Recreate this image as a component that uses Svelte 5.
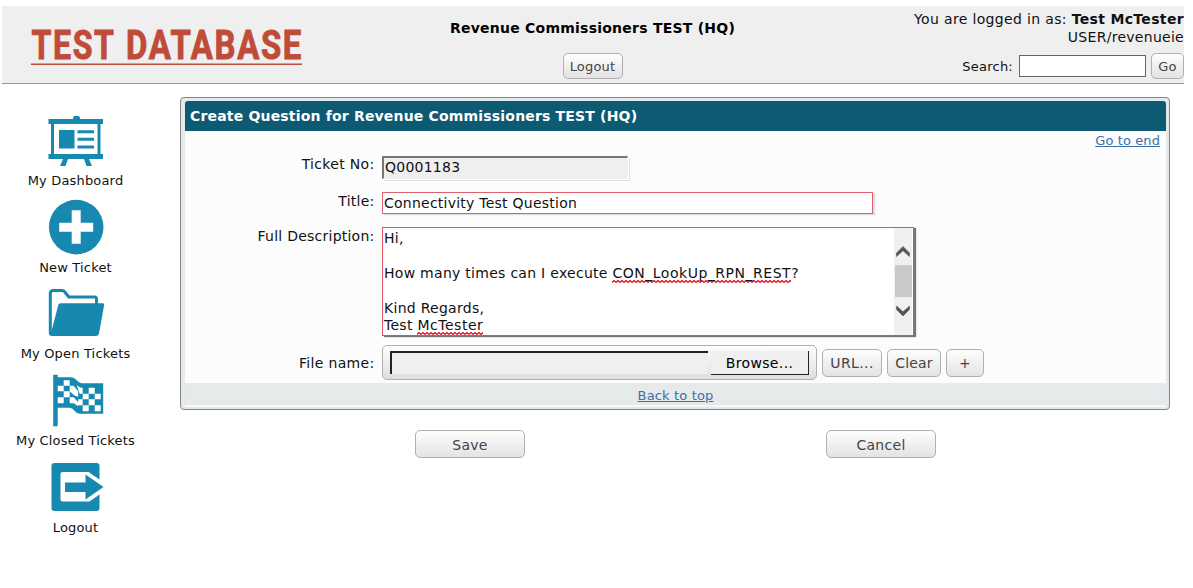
<script>
  const menu = [
    { icon: 'board', label: 'My Dashboard', view: '0.5 0 60 60' },
    { icon: 'plus', label: 'New Ticket', view: '0.3 0.7 60 60' },
    { icon: 'folder', label: 'My Open Tickets', view: '0.5 2 60 60' },
    { icon: 'flag', label: 'My Closed Tickets', view: '0.3 2.7 60 60' },
    { icon: 'exit', label: 'Logout', view: '0.5 2 60 60' }
  ];
</script>

<div class="page">
  <header>
    <div class="logo">
      <svg width="276" height="60" viewBox="0 -14 276 60">
        <text x="0.5" y="31" textLength="84" lengthAdjust="spacingAndGlyphs">TEST</text>
        <text x="95" y="31" textLength="177" lengthAdjust="spacingAndGlyphs">DATABASE</text>
        <rect x="0" y="35.500" width="271" height="1.5" fill="#bf4c38" />
      </svg>
    </div>
    <div class="org">
      <strong>Revenue Commissioners TEST (HQ)</strong>
      <button class="small">Logout</button>
    </div>
    <div class="user">
      <div class="who">You are logged in as: <strong>Test McTester</strong></div>
      <div class="role">USER/revenueie</div>
      <div class="search"><span>Search:</span><span class="searchbox"></span><button class="small go">Go</button></div>
    </div>
  </header>

  <div class="body">
    <nav>
      {#each menu as item}
        <div class="item">
          <svg width="60" height="60" viewBox={item.view} fill="#1789b0">
            {#if item.icon === 'board'}
              <path d="M27.500 7q0-2 2-2h3q2 0 2 2v1H57.500v5H55V43h2.500v5H43.500l3 7h-5.500l-2.500-7H22.500l-2.500 7h-5.500l3-7H3V43H5.500V13H3V8H27.500zM8.500 13V43H52V13zM13.500 19h15.500v18.500h-15.500zM32 19.200H48.500v3H32zM32 26.800H48.500v3H32zM32 34.500H48.500v3H32z" fill-rule="evenodd" />
            {:else if item.icon === 'plus'}
              <circle cx="30.500" cy="29.800" r="27.300" />
              <path d="M26 13h9v12.500h12.500v9H35v12h-9v-12H13.500v-9H26z" fill="#fff" />
            {:else if item.icon === 'folder'}
              <path d="M4.800 50V10.500q0-3 3-3h8.500q2 0 3 1.500l4 5H49q2 0 2 2v6" fill="none" stroke="#1789b0" stroke-width="3" stroke-linejoin="round" />
              <path d="M15 20.200H57.500q1.500 0 1.200 1.500L53.500 50.500q-.5 2.500-3 2.500H6.500q-3 0-3.200-3L6 48 12.800 22q.5-1.800 2.200-1.800z" />
            {:else if item.icon === 'flag'}
              <path d="M7.500 5.500h4.500v2.500h13.500q3 0 5 2.500t5 3.500H57.500V44.500H34q-3 0-5-2.800t-5-3.200H12V57H7.500z" />
              <path fill="#fff" d="M18 11h6v5.500h-6zM12 16.500h6v5.500h-6zM24 16.500h4l4.500 5.500v5.500l-3.500-1-5-4.500zM18 22h6v6h-6zM12 28h6v6h-6zM24 28h4l4.500 5v4l-4.500-3h-4zM31 16l4 2.500h2v6h-3zM43 18.500h6v6h-6zM37 24.500h6v5.500h-6zM49 24.500h6v5.500h-6zM32.500 30h4.500v6h-4.500zM43 30h6v6h-6zM37 36h6v6h-6zM49 36h6v6h-6z" />
            {:else}
              <path d="M9 6H51q3 0 3 3V51q0 3-3 3H9q-3 0-3-3V9q0-3 3-3z" />
              <path d="M17 15H43L60.500 27v6L44 44.500H17q-2 0-2-2V17q0-2 2-2z" fill="#fff" />
              <path d="M19.500 25.500H40v-8L58 30 40 42.500V35H19.500z" />
            {/if}
          </svg>
          <span>{item.label}</span>
        </div>
      {/each}
    </nav>

    <main>
      <section class="panel">
        <h1>Create Question for Revenue Commissioners TEST (HQ)</h1>
        <div class="form">
          <div class="toend"><a href="#end">Go to end</a></div>
          <div class="row ticket"><span class="label">Ticket No:</span><div class="readonly">Q0001183</div></div>
          <div class="row title"><span class="label">Title:</span><div class="field">Connectivity Test Question</div></div>
          <div class="row desc">
            <span class="label">Full Description:</span>
            <div class="area">
              <div class="lines">
                <p>Hi,</p>
                <p></p>
                <p>How many times can I execute <span class="spell">CON_LookUp_RPN_REST</span>?</p>
                <p></p>
                <p>Kind Regards,</p>
                <p>Test <span class="spell">McTester</span></p>
              </div>
              <div class="bar">
                <svg width="18" height="37" viewBox="0 0 18 37"><path d="M2.500 28.500V25L9 18.500l6.500 6.500v3.500L9 22.700z" fill="#555" stroke="#555" stroke-width=".6" /></svg>
                <div class="thumb"></div>
                <svg width="18" height="36" viewBox="0 0 18 36"><path d="M2.500 9v3.500L9 19l6.500-6.500V9L9 14.800z" fill="#555" stroke="#555" stroke-width=".6" /></svg>
              </div>
            </div>
          </div>
          <div class="row file">
            <span class="label">File name:</span>
            <div class="upload"><div class="path"></div><div class="browse">Browse...</div></div>
            <button class="b url">URL...</button>
            <button class="b clear">Clear</button>
            <button class="b add">+</button>
          </div>
        </div>
        <div class="foot"><a href="#top">Back to top</a></div>
      </section>
      <div class="actions"><button class="b">Save</button><button class="b">Cancel</button></div>
    </main>
  </div>
</div>

<style>
  :global(body) { background: #fff; overflow: hidden; }
  .page {
    box-sizing: border-box; width: 1193px; height: 588px; padding: 6px 9px 0 2px;
    font: 14px/18px Verdana, "DejaVu Sans", sans-serif; letter-spacing: .24px; color: #111; white-space: nowrap;
  }
  header {
    box-sizing: border-box; height: 78px; background: #efefef; border-bottom: 1px solid #999;
    display: grid; grid-template-columns: 395px 391px 1fr;
  }
  .logo { padding: 8px 0 0 29px; }
  .logo svg { display: block; }
  .logo text { font: 700 40px Roboto, sans-serif; letter-spacing: 2px; fill: #bf4c38; stroke: #bf4c38; stroke-width: .9px; }
  .org { display: flex; flex-direction: column; align-items: center; padding-top: 13px; color: #000; }
  .org button { width: 60px; margin-top: 16px; }
  button {
    box-sizing: border-box; padding: 1px 0 0; font: inherit; letter-spacing: .2px; color: #444; border: 1px solid #b0b0b0; border-radius: 5px;
    background: linear-gradient(#fefefe, #e3e3e3);
  }
  .small { height: 26px; font-size: 13px; }
  .user { text-align: right; padding-top: 4px; }
  .who { letter-spacing: .34px; }
  .role { letter-spacing: .28px; }
  .search { display: flex; justify-content: flex-end; align-items: center; height: 26px; margin-top: 7px; font-size: 13px; }
  .search span:first-child { padding-top: 1px; }
  .searchbox { box-sizing: border-box; width: 127px; height: 22px; border: 1px solid #666; background: #fff; margin: 0 5px 0 6px; }
  .go { width: 33px; }
  .body { display: flex; }
  nav { width: 147px; padding-top: 27px; margin-right: 31px; flex: none; }
  .item { height: 87px; display: flex; flex-direction: column; align-items: center; font-size: 13px; line-height: 18px; letter-spacing: .17px; }
  .item:nth-child(-n+2) span { padding-top: 1px; }
  .item svg { display: block; flex: none; }
  main { padding-top: 13px; width: 990px; flex: none; }
  .panel {
    box-sizing: border-box; height: 313px; border: 1px solid #858585; border-radius: 4px;
    background: #e4eaeb; padding: 3px 3px 3px 4px; overflow: hidden;
  }
  h1 {
    box-sizing: border-box; height: 30px; margin: 0; padding-left: 5px; background: #0e5a73; color: #fff;
    font-size: 14px; line-height: 30px; letter-spacing: .18px; border-radius: 3px 3px 0 0;
  }
  .form { height: 252px; background: #fcfcfc; }
  .toend { height: 25px; text-align: right; padding-right: 6px; font-size: 13px; line-height: 19px; letter-spacing: .1px; }
  a { color: #3b6fa8; text-decoration: underline; }
  .row { display: flex; }
  .label { width: 189.500px; text-align: right; margin-right: 7.500px; flex: none; }
  .ticket { height: 36px; }
  .ticket .label { margin-top: -1px; letter-spacing: .32px; }
  .readonly {
    box-sizing: border-box; width: 246px; height: 23px; background: #efefef; border: 2px solid; border-width: 2px 1px 1px 2px;
    border-color: #777 #eee #eee #777; padding-left: 1px; line-height: 19px; box-shadow: 1px 1px 0 #fff, 2px 2px 0 #ddd;
  }
  .title { height: 35px; }
  .field {
    box-sizing: border-box; width: 491px; height: 22px; border: 1px solid #e0606c; background: #fff; padding-left: 1px;
    line-height: 20px; box-shadow: 2px 1px 1px #ddd;
  }
  .desc { height: 118px; }
  .area {
    box-sizing: border-box; width: 532px; height: 109px; border: 1px solid #e0505c; background: #fff; padding: 0 1px;
    box-shadow: 2px 1px 1px #777; display: flex; justify-content: space-between;
  }
  .lines { padding-top: 2px; }
  p { margin: 0; height: 17.4px; line-height: 17.4px; letter-spacing: .28px; }
  .spell {
    letter-spacing: .52px; padding-bottom: 2px;
    background: url("data:image/svg+xml,%3Csvg xmlns='http://www.w3.org/2000/svg' width='4' height='3'%3E%3Cpath d='M0 2.500L2 .5 4 2.500' fill='none' stroke='%23e01020' stroke-width='1.300'/%3E%3C/svg%3E") 0 100% repeat-x;
  }
  .bar { width: 18px; background: #f0f0f0; display: flex; flex-direction: column; }
  .bar svg { display: block; }
  .thumb { height: 32px; background: #c9c9c9; margin: 0 0 0 1px; flex: none; }
  .file { align-items: center; }
  .file .label { line-height: 34px; letter-spacing: .32px; }
  .upload {
    box-sizing: border-box; width: 435px; height: 35px; border: 1px solid #b0b0b0; border-radius: 5px;
    background: linear-gradient(#fefefe, #dedede); padding: 5px 7px; display: flex; margin-right: 5px;
  }
  .path { box-sizing: border-box; width: 318px; height: 23px; margin-right: 3px; border: solid #222; border-width: 2px 0 0 2px; background: #efefef; }
  .browse {
    box-sizing: border-box; width: 98px; height: 24px; border: solid #222; border-width: 0 1px 1px 0; background: #efefef;
    text-align: center; color: #000; line-height: 24px; letter-spacing: .36px;
  }
  .b { height: 28px; }
  .url { width: 60px; margin-right: 5px; letter-spacing: .4px; }
  .clear { width: 54px; margin-right: 5px; }
  .add { width: 38px; }
  .foot {
    box-sizing: border-box; height: 24px; background: #e7eaea; border-bottom: 2px solid #f8f9f9;
    text-align: center; font-size: 13px; line-height: 26px; letter-spacing: .15px;
  }
  .actions { display: flex; padding: 20px 0 0 235px; gap: 301px; }
  .actions .b { width: 110px; letter-spacing: .3px; }
</style>
